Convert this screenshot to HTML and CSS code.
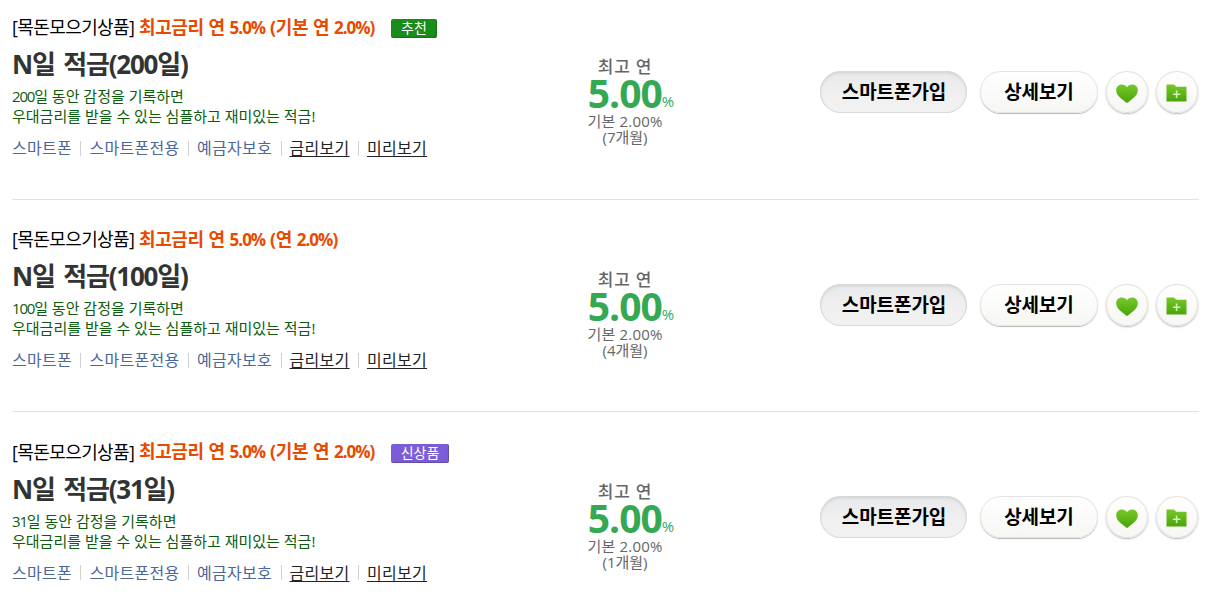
FILE: index.html
```html
<!DOCTYPE html>
<html lang="ko">
<head>
<meta charset="utf-8">
<title>적금 상품</title>
<link rel="stylesheet" href="styles.css">
</head>
<body>
<svg class="defs" width="0" height="0" aria-hidden="true">
  <defs>
    <linearGradient id="green" x1="0" y1="0" x2="0" y2="1"><stop offset="0" stop-color="#76c82a"/><stop offset="1" stop-color="#4aa508"/></linearGradient>
    <symbol id="heart" viewBox="0 0 22 19"><path fill="url(#green)" d="M11 18.800C10 18.800 9.400 17.900 8 16.700 3.300 13 .2 10.300.2 6.200.2 2.900 2.700.6 5.600.6 8 .6 9.900 1.500 11 3.300 12.100 1.500 14 .6 16.400.6c2.900 0 5.400 2.300 5.400 5.600 0 4.100-3.100 6.800-7.800 10.500-1.400 1.200-2 2.100-3 2.100z"/></symbol>
    <symbol id="folder" viewBox="0 0 21 18"><path fill="url(#green)" d="M.5 1Q.5.5 1 .5H7.500Q8.300.5 8.800 1.200L10.200 2.800H20Q20.500 2.800 20.500 3.300V17.500H.5Z"/><path fill="#d5f0b8" d="M9.800 6.500h1.600v2.900h2.900V11h-2.900v2.900H9.800V11H6.900V9.400h2.900z"/></symbol>
  </defs>
</svg>
<ul class="products">
  <li class="product">
    <div class="info">
      <p class="headline"><span class="category">[목돈모으기상품]</span><strong class="rate-text">최고금리 연 <span class="num">5.0%</span> (기본 연 <span class="num">2.0%)</span></strong><span class="badge badge-pick">추천</span></p>
      <h2 class="title">N일 적금(200일)</h2>
      <p class="desc"><span class="num">200</span>일 동안 감정을 기록하면<br>우대금리를 받을 수 있는 심플하고 재미있는 적금!</p>
      <ul class="tags"><li>스마트폰</li><li>스마트폰전용</li><li>예금자보호</li><li><a>금리보기</a></li><li><a>미리보기</a></li></ul>
    </div>
    <div class="rate"><span class="rate-label">최고 연</span><span class="rate-value"><b>5.00</b><i>%</i></span><span class="rate-base">기본 2.00%</span><span class="rate-term">(7개월)</span></div>
    <div class="actions"><button class="pill pill-join">스마트폰가입</button><button class="pill pill-more">상세보기</button><button class="round"><svg class="heart"><use href="#heart"/></svg></button><button class="round"><svg class="folder"><use href="#folder"/></svg></button></div>
  </li>
  <li class="product">
    <div class="info">
      <p class="headline"><span class="category">[목돈모으기상품]</span><strong class="rate-text">최고금리 연 <span class="num">5.0%</span> (연 <span class="num">2.0%)</span></strong></p>
      <h2 class="title">N일 적금(100일)</h2>
      <p class="desc"><span class="num">100</span>일 동안 감정을 기록하면<br>우대금리를 받을 수 있는 심플하고 재미있는 적금!</p>
      <ul class="tags"><li>스마트폰</li><li>스마트폰전용</li><li>예금자보호</li><li><a>금리보기</a></li><li><a>미리보기</a></li></ul>
    </div>
    <div class="rate"><span class="rate-label">최고 연</span><span class="rate-value"><b>5.00</b><i>%</i></span><span class="rate-base">기본 2.00%</span><span class="rate-term">(4개월)</span></div>
    <div class="actions"><button class="pill pill-join">스마트폰가입</button><button class="pill pill-more">상세보기</button><button class="round"><svg class="heart"><use href="#heart"/></svg></button><button class="round"><svg class="folder"><use href="#folder"/></svg></button></div>
  </li>
  <li class="product">
    <div class="info">
      <p class="headline"><span class="category">[목돈모으기상품]</span><strong class="rate-text">최고금리 연 <span class="num">5.0%</span> (기본 연 <span class="num">2.0%)</span></strong><span class="badge badge-new">신상품</span></p>
      <h2 class="title">N일 적금(31일)</h2>
      <p class="desc"><span class="num">31</span>일 동안 감정을 기록하면<br>우대금리를 받을 수 있는 심플하고 재미있는 적금!</p>
      <ul class="tags"><li>스마트폰</li><li>스마트폰전용</li><li>예금자보호</li><li><a>금리보기</a></li><li><a>미리보기</a></li></ul>
    </div>
    <div class="rate"><span class="rate-label">최고 연</span><span class="rate-value"><b>5.00</b><i>%</i></span><span class="rate-base">기본 2.00%</span><span class="rate-term">(1개월)</span></div>
    <div class="actions"><button class="pill pill-join">스마트폰가입</button><button class="pill pill-more">상세보기</button><button class="round"><svg class="heart"><use href="#heart"/></svg></button><button class="round"><svg class="folder"><use href="#folder"/></svg></button></div>
  </li>
</ul>
</body>
</html>
```
FILE: styles.css
```css
* { box-sizing: border-box; margin: 0; padding: 0; }
body {
  background: #fff;
  height: 610px;
  overflow: hidden;
  font-family: "Open Sans", "Noto Sans CJK KR", sans-serif;
  color: #333;
}
.defs { display: block; }
ul { list-style: none; }
.products { width: 1187px; margin-left: 12px; }
.product {
  display: grid;
  grid-template-columns: 538px 150px 1fr;
  height: 212.4px;
  border-bottom: 1px solid #e2e2e2;
  white-space: nowrap;
}
.product:first-child { height: 200px; }
.product:first-child .info { padding-top: 15px; }
.product:first-child .rate { padding-top: 56px; }
.product:first-child .actions { padding-top: 71px; }
.product:last-child { border-bottom: 0; }
.info { padding-top: 27.400px; }
.headline { display: flex; align-items: center; height: 24px; line-height: 24px; font-size: 18px; }
.category { width: 127px; color: #000; letter-spacing: -0.6px; }
.rate-text { color: #e84a00; font-weight: 700; letter-spacing: -0.4px; word-spacing: .6px; }
.rate-text .num { font-size: 17px; letter-spacing: -1px; }
.badge {
  height: 19px;
  margin: 3px 0 0;
  border-radius: 2px;
  color: #fff;
  font-size: 14px;
  line-height: 18px;
  text-align: center;
  box-shadow: inset -1px -1px 1px rgba(0, 0, 0, .2);
}
.rate-text:nth-last-child(2) { width: 252px; }
.badge-pick { width: 46px; background: #1a8c1a; }
.badge-new { width: 58px; background: #7b5dd8; }
.title { height: 38px; margin-top: 6px; line-height: 38px; font-size: 26px; font-weight: 700; letter-spacing: -1.200px; word-spacing: 3px; }
.desc { margin-top: 3px; line-height: 20px; font-size: 15px; color: #0b5c0b; }
.desc .num { letter-spacing: -1.200px; }
.tags { display: flex; align-items: center; margin-top: 11px; height: 22px; line-height: 22px; font-size: 16px; color: #4c6798; letter-spacing: .3px; }
.tags li { display: flex; align-items: center; }
.tags li + li::before { content: ""; width: 1px; height: 15px; margin: 0 8px 0 8.400px; background: #d2d2d2; }
.tags a { color: #222; text-decoration: underline; text-decoration-thickness: 1px; text-underline-offset: 2px; }
.rate { display: flex; flex-direction: column; align-items: center; padding-top: 68.500px; width: 150px; color: #666; }
.rate-label { height: 19px; line-height: 21px; font-size: 17px; font-weight: 500; letter-spacing: .8px; }
.rate-value { display: flex; align-items: baseline; height: 38px; line-height: 35px; color: #34a853; margin-left: 12px; }
.rate-value b { font-size: 39px; font-weight: 700; letter-spacing: -1px; }
.rate-value i { font-style: normal; font-size: 15px; transform: translateY(-1px); }
.rate-base { height: 17px; line-height: 17px; font-size: 15px; letter-spacing: .2px; }
.rate-term { height: 16px; line-height: 15px; font-size: 15px; }
.actions { display: flex; align-items: flex-start; padding: 83.500px 0 0 120px; }
button { border: 0; font: 700 19px/42px "Open Sans", "Noto Sans CJK KR", sans-serif; letter-spacing: -0.1px; color: #000; white-space: nowrap; }
.pill { height: 42px; padding-left: 1px; border-radius: 21px; }
.pill-join { width: 147px; background: linear-gradient(#e8e9eb, #efeff0 50%, #f2f2f2); box-shadow: inset 0 0 0 1px #d8d9db, inset 0 2px 3px #d0d1d4; }
.pill-more { width: 118px; margin-left: 12.500px; background: linear-gradient(#fff, #f6f6f3); box-shadow: inset 0 0 0 1px #e4e4e4, 0 1px 1px #b8b8b8; }
.round {
  display: flex; align-items: center; justify-content: center;
  width: 42px; height: 42px; margin-left: 8.200px; border-radius: 50%;
  background: linear-gradient(#fff, #f6f6f3);
  box-shadow: inset 0 0 0 1px #e2e2e2, 0 1px 2px #b4b4b4;
}
.heart { width: 22px; height: 19px; margin-top: 3px; }
.folder { width: 21px; height: 18px; margin-top: 2px; }
```
